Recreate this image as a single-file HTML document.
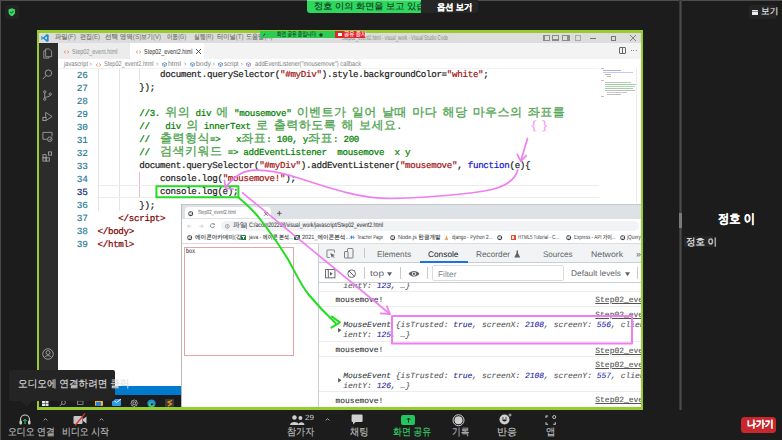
<!DOCTYPE html>
<html><head><meta charset="utf-8"><style>
*{margin:0;padding:0;box-sizing:border-box}
html,body{width:782px;height:440px;overflow:hidden;background:#1c1c1c}
body{position:relative;font-family:"Liberation Sans",sans-serif;text-rendering:geometricPrecision}
.a{position:absolute;white-space:pre}
.ui{font-family:"Liberation Sans",sans-serif}
.code{font-family:"Liberation Mono",monospace;font-size:9.2px;letter-spacing:-0.3px;line-height:13px;height:13px;color:#1f1f1f;-webkit-text-stroke:0.22px}
.ln{font-family:"Liberation Mono",monospace;font-size:9.4px;letter-spacing:-0.3px;line-height:13px;color:#237893;text-align:right;width:30px;-webkit-text-stroke:0.15px}
.cm{color:#008000}.st{color:#a31515}.kw{color:#1515d0}.tg{color:#800000}
.k{font-family:"Liberation Sans",sans-serif;font-size:12px;letter-spacing:0.49px;line-height:0;-webkit-text-stroke:0.3px}
.cm .k{color:#4ea34e}
.k2{-webkit-text-stroke:0.15px}
.con{font-family:"Liberation Mono",monospace;font-size:7.97px;line-height:10.2px;color:#303030;-webkit-text-stroke:0.1px}
.it{font-style:italic}
.num{color:#1a1aa6}
.lk{color:#555;text-decoration:underline}
svg{position:absolute;overflow:visible}
</style></head><body>
<div class="a" style="left:0px;top:0px;width:782px;height:1px;background:#4e4e4e;"></div>
<div class="a" style="left:0px;top:0px;width:1px;height:440px;background:#4a4a4a;"></div>
<div class="a" style="left:37px;top:30px;width:606px;height:379.5px;background:#97cc2e;"></div>
<div class="a" style="left:39px;top:33px;width:602px;height:374px;background:#fff;overflow:hidden">
<div class="a" style="left:-39px;top:-33px;width:782px;height:440px">
<div class="a" style="left:39px;top:33px;width:602px;height:10px;background:#dddddd;"></div>
<div class="a" style="left:39px;top:43px;width:19px;height:343px;background:#2c2c2c;"></div>
<div class="a" style="left:58px;top:43px;width:583px;height:15.6px;background:#f3f3f3;"></div>
<div class="a" style="left:58px;top:43px;width:72px;height:15.6px;background:#ececec;"></div>
<div class="a" style="left:130px;top:43px;width:74px;height:15.6px;background:#ffffff;"></div>
<div class="a" style="left:39px;top:385.8px;width:602px;height:9.6px;background:#007acc;"></div>
<div class="a" style="left:39px;top:395.4px;width:602px;height:12px;background:#1c1c1e;"></div>
<svg style="left:41px;top:34px;" width="8" height="8" viewBox="0 0 100 100"><path d="M96 10 L74 0 L30 42 L10 27 L2 31 L2 69 L10 73 L30 58 L74 100 L96 90 Z M74 28 L74 72 L44 50 Z M10 38 L22 50 L10 62 Z" fill="#1f8ad2" fill-rule="evenodd"></path></svg>
<div class="a ui" style="left: 55.3px; top: 34px; font-size: 7px; line-height: 8px; color: rgb(111, 111, 111); display: inline-block; transform: scaleX(0.91); transform-origin: 0px 0px;"><span class="k2">파일</span>(F)</div>
<div class="a ui" style="left: 80px; top: 34px; font-size: 7px; line-height: 8px; color: rgb(111, 111, 111); display: inline-block; transform: scaleX(0.857); transform-origin: 0px 0px;"><span class="k2">편집</span>(E)</div>
<div class="a ui" style="left: 104.6px; top: 34px; font-size: 7px; line-height: 8px; color: rgb(111, 111, 111); display: inline-block; transform: scaleX(0.929); transform-origin: 0px 0px;"><span class="k2">선택 영역</span>(S)</div>
<div class="a ui" style="left: 141px; top: 34px; font-size: 7px; line-height: 8px; color: rgb(111, 111, 111); display: inline-block; transform: scaleX(0.857); transform-origin: 0px 0px;"><span class="k2">보기</span>(V)</div>
<div class="a ui" style="left: 167px; top: 34px; font-size: 7px; line-height: 8px; color: rgb(111, 111, 111); display: inline-block; transform: scaleX(0.801); transform-origin: 0px 0px;"><span class="k2">이동</span>(G)</div>
<div class="a ui" style="left: 194px; top: 34px; font-size: 7px; line-height: 8px; color: rgb(111, 111, 111); display: inline-block; transform: scaleX(0.816); transform-origin: 0px 0px;"><span class="k2">실행</span>(R)</div>
<div class="a ui" style="left: 217px; top: 34px; font-size: 7px; line-height: 8px; color: rgb(111, 111, 111); display: inline-block; transform: scaleX(0.891); transform-origin: 0px 0px;"><span class="k2">터미널</span>(T)</div>
<div class="a ui" style="left: 246px; top: 34px; font-size: 7px; line-height: 8px; color: rgb(111, 111, 111); display: inline-block; transform: scaleX(0.864); transform-origin: 0px 0px;"><span class="k2">도움말</span>(H)</div>
<div class="a ui" style="left: 342px; top: 34.6px; font-size: 7px; line-height: 8px; color: rgb(138, 138, 138); display: inline-block; transform: scaleX(0.621); transform-origin: 0px 0px;">Step02_event2.html - visual_work - Visual Studio Code</div>
<div class="a" style="left:542.5px;top:35px;width:7px;height:6px;background:transparent;border:1px solid #8a8a8a"></div>
<div class="a" style="left:552px;top:35px;width:7px;height:6px;background:transparent;border:1px solid #8a8a8a"></div>
<div class="a" style="left:561.5px;top:35px;width:7px;height:6px;background:transparent;border:1px solid #8a8a8a"></div>
<div class="a" style="left:542.5px;top:35px;width:2.5px;height:6px;background:#8a8a8a;"></div>
<div class="a" style="left:552px;top:38.5px;width:7px;height:2.5px;background:#8a8a8a;"></div>
<div class="a" style="left:567px;top:35px;width:2.5px;height:6px;background:#8a8a8a;"></div>
<div class="a" style="left:575px;top:35px;width:6px;height:6px;background:transparent;border:1px solid #aaa"></div>
<div class="a" style="left:590px;top:38px;width:6px;height:0.9px;background:#777;"></div>
<div class="a" style="left:610.5px;top:35.5px;width:5px;height:5px;background:transparent;border:0.9px solid #777"></div>
<svg style="left:630px;top:35px;" width="6" height="6" viewBox="0 0 6 6"><path d="M0 0L6 6M6 0L0 6" stroke="#666" stroke-width="0.8"></path></svg>
<svg style="left:64px;top:49.8px;" width="5" height="4" viewBox="0 0 10 8"><path d="M3 1 L0.8 4 L3 7 M7 1 L9.2 4 L7 7" stroke="#e37933" stroke-width="1.6" fill="none"></path></svg>
<div class="a ui" style="left: 71.9px; top: 47px; font-size: 7.3px; line-height: 9px; color: rgb(140, 140, 140); display: inline-block; transform: scaleX(0.748); transform-origin: 0px 0px;">Step02_event.html</div>
<svg style="left:136px;top:49.8px;" width="5" height="4" viewBox="0 0 10 8"><path d="M3 1 L0.8 4 L3 7 M7 1 L9.2 4 L7 7" stroke="#e37933" stroke-width="1.6" fill="none"></path></svg>
<div class="a ui" style="left: 143.5px; top: 47px; font-size: 7.3px; line-height: 9px; color: rgb(51, 51, 51); display: inline-block; transform: scaleX(0.747); transform-origin: 0px 0px;">Step02_event2.html</div>
<svg style="left:195.5px;top:49px;" width="5" height="5" viewBox="0 0 6 6"><path d="M0 0L6 6M6 0L0 6" stroke="#444" stroke-width="1.1"></path></svg>
<div class="a" style="left:618.5px;top:47px;width:7px;height:7px;background:transparent;border:1px solid #666;border-radius:1px"></div>
<div class="a" style="left:621.5px;top:47px;width:1px;height:7px;background:#666;"></div>
<div class="a" style="left:631.0px;top:50.3px;width:1.2px;height:1.2px;background:#888;"></div>
<div class="a" style="left:633.3px;top:50.3px;width:1.2px;height:1.2px;background:#888;"></div>
<div class="a" style="left:635.6px;top:50.3px;width:1.2px;height:1.2px;background:#888;"></div>
<div class="a ui" style="left: 64px; top: 60.5px; font-size: 6.9px; line-height: 8px; color: rgb(122, 122, 122); display: inline-block; transform: scaleX(0.824); transform-origin: 0px 0px;">javascript</div>
<div class="a ui" style="left:89.5px;top:60.5px;font-size:7px;line-height:8px;color:#999;">›</div>
<svg style="left:96px;top:62.6px;" width="5" height="4" viewBox="0 0 10 8"><path d="M3 1 L0.8 4 L3 7 M7 1 L9.2 4 L7 7" stroke="#e37933" stroke-width="1.6" fill="none"></path></svg>
<div class="a ui" style="left: 103.5px; top: 60.5px; font-size: 6.9px; line-height: 8px; color: rgb(122, 122, 122); display: inline-block; transform: scaleX(0.808); transform-origin: 0px 0px;">Step02_event2.html</div>
<div class="a ui" style="left:156px;top:60.5px;font-size:7px;line-height:8px;color:#999;">›</div>
<svg style="left:161.5px;top:62px;" width="5" height="5" viewBox="0 0 10 10"><path d="M5 1 L9 3 L9 7 L5 9 L1 7 L1 3 Z M1 3 L5 5 L9 3 M5 5 V9" stroke="#3f77b5" stroke-width="1.2" fill="none"></path></svg>
<div class="a ui" style="left: 168px; top: 60.5px; font-size: 6.9px; line-height: 8px; color: rgb(122, 122, 122); display: inline-block; transform: scaleX(0.998); transform-origin: 0px 0px;">html</div>
<div class="a ui" style="left:184px;top:60.5px;font-size:7px;line-height:8px;color:#999;">›</div>
<svg style="left:189.5px;top:62px;" width="5" height="5" viewBox="0 0 10 10"><path d="M5 1 L9 3 L9 7 L5 9 L1 7 L1 3 Z M1 3 L5 5 L9 3 M5 5 V9" stroke="#3f77b5" stroke-width="1.2" fill="none"></path></svg>
<div class="a ui" style="left: 196px; top: 60.5px; font-size: 6.9px; line-height: 8px; color: rgb(122, 122, 122); display: inline-block; transform: scaleX(1.003); transform-origin: 0px 0px;">body</div>
<div class="a ui" style="left:212.5px;top:60.5px;font-size:7px;line-height:8px;color:#999;">›</div>
<svg style="left:217.5px;top:62px;" width="5" height="5" viewBox="0 0 10 10"><path d="M5 1 L9 3 L9 7 L5 9 L1 7 L1 3 Z M1 3 L5 5 L9 3 M5 5 V9" stroke="#3f77b5" stroke-width="1.2" fill="none"></path></svg>
<div class="a ui" style="left: 224px; top: 60.5px; font-size: 6.9px; line-height: 8px; color: rgb(122, 122, 122); display: inline-block; transform: scaleX(0.88); transform-origin: 0px 0px;">script</div>
<div class="a ui" style="left:240.5px;top:60.5px;font-size:7px;line-height:8px;color:#999;">›</div>
<svg style="left:245.5px;top:62px;" width="5" height="5" viewBox="0 0 10 10"><path d="M5 1 L9 3 L9 7 L5 9 L1 7 L1 3 Z M1 3 L5 5 L9 3 M5 5 V9" stroke="#8e5fb8" stroke-width="1.2" fill="none"></path></svg>
<div class="a ui" style="left: 255px; top: 60.5px; font-size: 6.9px; line-height: 8px; color: rgb(122, 122, 122); display: inline-block; transform: scaleX(0.832); transform-origin: 0px 0px;">addEventListener("mousemove") callback</div>
<svg style="left:42px;top:48px;" width="11" height="11" viewBox="0 0 24 24"><g fill="none" stroke="#a9a9a9" stroke-width="1.7"><path d="M8 6 H4 V22 H15 V19"></path><path d="M8 2 H16 L21 7 V19 H8 Z"></path></g></svg>
<svg style="left:42px;top:69px;" width="11" height="11" viewBox="0 0 24 24"><g fill="none" stroke="#a9a9a9" stroke-width="1.9"><circle cx="14" cy="9" r="7"></circle><path d="M9 14 L2 22"></path></g></svg>
<svg style="left:42px;top:90px;" width="11" height="11" viewBox="0 0 24 24"><g fill="none" stroke="#a9a9a9" stroke-width="1.8"><circle cx="6" cy="4" r="2.5"></circle><circle cx="6" cy="20" r="2.5"></circle><circle cx="18" cy="9" r="2.5"></circle><path d="M6 6.5 V17.5 M18 11.5 C18 16 6 14 6 17.5"></path></g></svg>
<svg style="left:42px;top:111px;" width="11" height="11" viewBox="0 0 24 24"><g fill="none" stroke="#a9a9a9" stroke-width="1.8"><path d="M8 13 V3 L22 12 L10 20"></path><rect x="2" y="14" width="7" height="7"></rect></g></svg>
<svg style="left:42px;top:131px;" width="11" height="11" viewBox="0 0 24 24"><g fill="none" stroke="#a9a9a9" stroke-width="1.8"><path d="M11 18 H2 V3 H22 V12"></path><circle cx="17" cy="18" r="5"></circle><path d="M15 18 L17 20 L20 16"></path></g></svg>
<svg style="left:42px;top:151px;" width="11" height="11" viewBox="0 0 24 24"><g fill="none" stroke="#a9a9a9" stroke-width="1.8"><rect x="2" y="8" width="7" height="7"></rect><rect x="2" y="15" width="7" height="7"></rect><rect x="9" y="15" width="7" height="7"></rect><rect x="14" y="2" width="7" height="7"></rect></g></svg>
<svg style="left:41.5px;top:348px;" width="12" height="12" viewBox="0 0 24 24"><g fill="none" stroke="#a9a9a9" stroke-width="1.7"><circle cx="12" cy="12" r="10.5"></circle><circle cx="12" cy="9" r="4"></circle><path d="M5 19 C7 14 17 14 19 19"></path></g></svg>
<div class="a" style="left:98.3px;top:67.7px;width:1px;height:143.22px;background:#e4e4e4;"></div>
<div class="a" style="left:118.5px;top:67.7px;width:1px;height:143.22px;background:#e4e4e4;"></div>
<div class="a" style="left:139.1px;top:67.7px;width:1px;height:13.02px;background:#e4e4e4;"></div>
<div class="a" style="left:139.1px;top:171.86px;width:1px;height:26.04px;background:#e9c0c0;"></div>
<div class="a" style="left:97px;top:185px;width:502px;height:1px;background:#ececec;"></div>
<div class="a" style="left:97px;top:197px;width:502px;height:1px;background:#ececec;"></div>
<div class="a" style="left:58px;top:67.5px;width:541px;height:1px;background:#f2f2f2;"></div>
<div class="a" style="left:601px;top:68px;width:36px;height:30px;opacity:0.55">
<div class="a" style="left:0px;top:0px;width:3px;height:1px;background:#d07070;"></div>
<div class="a" style="left:2px;top:2px;width:18px;height:1px;background:#6070c8;"></div>
<div class="a" style="left:2px;top:4px;width:30px;height:1px;background:#9aa0e0;"></div>
<div class="a" style="left:4px;top:6px;width:6px;height:1px;background:#50a050;"></div>
<div class="a" style="left:6px;top:8px;width:4px;height:1px;background:#e06060;"></div>
<div class="a" style="left:0px;top:12px;width:3px;height:1px;background:#d07070;"></div>
<div class="a" style="left:4px;top:14px;width:26px;height:1px;background:#70b070;"></div>
<div class="a" style="left:4px;top:16px;width:32px;height:1px;background:#60a060;"></div>
<div class="a" style="left:4px;top:18px;width:30px;height:1px;background:#70b070;"></div>
<div class="a" style="left:4px;top:20px;width:28px;height:1px;background:#60a060;"></div>
<div class="a" style="left:4px;top:22px;width:30px;height:1px;background:#888;"></div>
<div class="a" style="left:6px;top:24px;width:20px;height:1px;background:#999;"></div>
<div class="a" style="left:6px;top:26px;width:14px;height:1px;background:#888;"></div>
<div class="a" style="left:0px;top:28px;width:3px;height:1px;background:#d07070;"></div>
</div>
<div class="a" style="left:636px;top:68px;width:1px;height:135px;background:#ebebeb;"></div>
<div class="a ln" style="left:57.5px;top:68.9px">26</div>
<div class="a code" style="left:97.5px;top:68.3px">            document.querySelector(<span class="st">"#myDiv"</span>).style.backgroundColor=<span class="st">"white"</span>;</div>
<div class="a ln" style="left:57.5px;top:81.92px">27</div>
<div class="a code" style="left:97.5px;top:81.32px">        });</div>
<div class="a ln" style="left:57.5px;top:94.94px">28</div>
<div class="a code" style="left:97.5px;top:94.34px"></div>
<div class="a ln" style="left:57.5px;top:107.96px">29</div>
<div class="a code" style="left:97.5px;top:107.36px"><span class="cm">        //3. <span class="k">위의</span> div <span class="k">에</span> "mousemove" <span class="k">이벤트가</span> <span class="k">일어</span> <span class="k">날때</span> <span class="k">마다</span> <span class="k">해당</span> <span class="k">마우스의</span> <span class="k">좌표를</span></span></div>
<div class="a ln" style="left:57.5px;top:120.98px">30</div>
<div class="a code" style="left:97.5px;top:120.38px"><span class="cm">        //   div <span class="k">의</span> innerText <span class="k">로</span> <span class="k">출력하도록</span> <span class="k">해</span> <span class="k">보세요</span>.</span></div>
<div class="a ln" style="left:57.5px;top:134.0px">31</div>
<div class="a code" style="left:97.5px;top:133.4px"><span class="cm">        //  <span class="k">출력형식</span>=&gt;   x<span class="k">좌표</span>: 100, y<span class="k">좌표</span>: 200</span></div>
<div class="a ln" style="left:57.5px;top:147.02px">32</div>
<div class="a code" style="left:97.5px;top:146.42px"><span class="cm">        //  <span class="k">검색키워드</span> =&gt; addEventListener  mousemove  x y</span></div>
<div class="a ln" style="left:57.5px;top:160.04px">33</div>
<div class="a code" style="left:97.5px;top:159.44px">        document.querySelector(<span class="st">"#myDiv"</span>).addEventListener(<span class="st">"mousemove"</span>, <span class="kw">function</span>(e){</div>
<div class="a ln" style="left:57.5px;top:173.06px">34</div>
<div class="a code" style="left:97.5px;top:172.46px">            console.log(<span class="st">"mousemove!"</span>);</div>
<div class="a ln" style="left:57.5px;top:186.08px;color:#0b216f">35</div>
<div class="a code" style="left:97.5px;top:185.48px">            console.log(e);</div>
<div class="a ln" style="left:57.5px;top:199.1px">36</div>
<div class="a code" style="left:97.5px;top:198.5px">        });</div>
<div class="a ln" style="left:57.5px;top:212.12px">37</div>
<div class="a code" style="left:97.5px;top:211.52px">    <span class="tg">&lt;/script&gt;</span></div>
<div class="a ln" style="left:57.5px;top:225.14px">38</div>
<div class="a code" style="left:97.5px;top:224.54px"><span class="tg">&lt;/body&gt;</span></div>
<div class="a ln" style="left:57.5px;top:238.16px">39</div>
<div class="a code" style="left:97.5px;top:237.56px"><span class="tg">&lt;/html&gt;</span></div>
<svg style="left:42px;top:400.5px;" width="6.5" height="5" viewBox="0 0 13 10"><path d="M0 0H6V4.5H0ZM7 0H13V4.5H7ZM0 5.5H6V10H0ZM7 5.5H13V10H7Z" fill="#e8e8e8"></path></svg>
<svg style="left:59px;top:400px;" width="7" height="6" viewBox="0 0 14 12"><g fill="none" stroke="#ccc" stroke-width="1.2"><circle cx="9" cy="5" r="4"></circle><path d="M6 8 L1 12"></path></g></svg>
<svg style="left:77px;top:400px;" width="6.5" height="5.5" viewBox="0 0 13 11"><g fill="none" stroke="#bbb" stroke-width="1.2"><rect x="1" y="2" width="11" height="7"></rect><path d="M4 0 H12"></path></g></svg>
<div class="a" style="left:94.5px;top:399.5px;width:8px;height:6px;background:#f2b632;border-radius:1px"></div>
<div class="a" style="left:96px;top:402px;width:5px;height:3.5px;background:#2f7dd4;"></div>
<div class="a" style="left:111.5px;top:398.5px;width:9px;height:7.5px;background:#2f9be8;border-radius:1px"></div>
<svg style="left:111.5px;top:399px;" width="9" height="5" viewBox="0 0 9 5"><path d="M0 0 L4.5 3.5 L9 0" stroke="#e9f4fc" stroke-width="1" fill="none"></path></svg>
<svg style="left:129.5px;top:398.5px;" width="8.5" height="8.5" viewBox="0 0 24 24"><g fill="none" stroke="#cfcfcf" stroke-width="2.2"><circle cx="12" cy="12" r="4"></circle><path d="M12 2 L15 5 L19 5 L19 9 L22 12 L19 15 L19 19 L15 19 L12 22 L9 19 L5 19 L5 15 L2 12 L5 9 L5 5 L9 5 Z"></path></g></svg>
<svg style="left:147.2px;top:398.5px;" width="9" height="9" viewBox="0 0 24 24"><circle cx="12" cy="12" r="11" fill="#1b8fd8"></circle><path d="M4 14 C5 8 16 6 20 12 C19 9 12 9 12 14 C13 18 20 18 22 15 C20 22 8 24 4 14Z" fill="#3ccf6a"></path><circle cx="12.5" cy="14" r="3" fill="#1c1c1e"></circle></svg>
<div class="a" style="left:165px;top:398.5px;width:8.6px;height:8.5px;background:#3b3b3b;"></div>
<svg style="left:166.5px;top:399.5px;" width="6" height="6.5" viewBox="0 0 12 13"><path d="M10 1 L2 4 L9 8 L2 12" stroke="#ff9a1a" stroke-width="2.2" fill="none"></path></svg>
<div class="a" style="left:181px;top:203.5px;width:460px;height:204px;background:#ffffff;border-left:1px solid #b9b9b9;border-top:1px solid #c6c6c6"></div>
<div class="a" style="left:182px;top:204.5px;width:459px;height:14px;background:#dee1e6;"></div>
<div class="a" style="left:184.6px;top:206.9px;width:86px;height:11.6px;background:#ffffff;border-radius:4px 4px 0 0"></div>
<svg style="left:188.3px;top:210.8px;" width="5.4" height="5.4" viewBox="0 0 10 10"><circle cx="5" cy="5" r="4.6" fill="#3c4043"></circle><path d="M2 3 C4 4 5 2 7 2 C8 4 6 5 8 7 C6 8 5 6 3 8 C3 6 1 6 2 3Z" fill="#fff" opacity="0.85"></path></svg>
<div class="a ui" style="left: 197.6px; top: 210.2px; font-size: 6px; line-height: 7px; color: rgb(95, 99, 104); display: inline-block; transform: scaleX(0.712); transform-origin: 0px 0px;">Step02_event2.html</div>
<svg style="left:263.6px;top:211.6px;" width="3.8" height="3.8" viewBox="0 0 6 6"><path d="M0 0L6 6M6 0L0 6" stroke="#555" stroke-width="1.1"></path></svg>
<svg style="left:276.8px;top:211px;" width="4.6" height="4.6" viewBox="0 0 6 6"><path d="M3 0V6M0 3H6" stroke="#444" stroke-width="1.1"></path></svg>
<div class="a" style="left:182px;top:218.5px;width:459px;height:13px;background:#ffffff;"></div>
<svg style="left:187.3px;top:223.6px;" width="4.8" height="4.4" viewBox="0 0 10 9"><path d="M9 4.5H1.5 M5 1 L1.3 4.5 L5 8" stroke="#b8b8b8" stroke-width="1.3" fill="none"></path></svg>
<svg style="left:198.5px;top:223.6px;" width="4.8" height="4.4" viewBox="0 0 10 9"><path d="M1 4.5H8.5 M5 1 L8.7 4.5 L5 8" stroke="#b8b8b8" stroke-width="1.3" fill="none"></path></svg>
<svg style="left:210.2px;top:223.4px;" width="5" height="5" viewBox="0 0 10 10"><path d="M8.3 3.3 A4 4 0 1 0 8.8 6" stroke="#5f6368" stroke-width="1.4" fill="none"></path><path d="M6 1 L9.3 1 L9.3 4.3Z" fill="#5f6368"></path></svg>
<div class="a" style="left:221.4px;top:220.7px;width:418px;height:10px;background:#f1f3f4;border-radius:5px"></div>
<svg style="left:224.8px;top:223.5px;" width="4.6" height="4.6" viewBox="0 0 10 10"><circle cx="5" cy="5" r="4.2" stroke="#5f6368" stroke-width="1.1" fill="none"></circle><path d="M5 4V7.5" stroke="#5f6368" stroke-width="1.2"></path><circle cx="5" cy="2.6" r="0.7" fill="#5f6368"></circle></svg>
<div class="a ui" style="left: 232.6px; top: 222.1px; font-size: 6.5px; line-height: 7.5px; color: rgb(95, 99, 104); display: inline-block; transform: scaleX(1.026); transform-origin: 0px 0px;"><span class="k2">파일</span></div>
<div class="a" style="left:245.5px;top:222.5px;width:0.8px;height:6.5px;background:#9aa0a6;"></div>
<div class="a ui" style="left: 248.6px; top: 222.1px; font-size: 6.5px; line-height: 7.5px; color: rgb(32, 33, 36); display: inline-block; transform: scaleX(0.785); transform-origin: 0px 0px;">C:/acorn202208/visual_work/javascript/Step02_event2.html</div>
<svg style="left:187.1px;top:235.1px;" width="5.4" height="5.4" viewBox="0 0 10 10"><circle cx="5" cy="5" r="4.6" fill="#3c4043"></circle><path d="M2 3 C4 4 5 2 7 2 C8 4 6 5 8 7 C6 8 5 6 3 8 C3 6 1 6 2 3Z" fill="#fff" opacity="0.85"></path></svg>
<div class="a ui" style="left: 195px; top: 234.6px; font-size: 6px; line-height: 7px; color: rgb(60, 64, 67); display: inline-block; transform: scaleX(0.93); transform-origin: 0px 0px;"><span class="k2">에이콘아카데미</span>(<span class="k2">강</span>...</div>
<div class="a" style="left:240.6px;top:234.6px;width:5.5px;height:5.7px;background:#188038;border-radius:0.6px"></div>
<div class="a" style="left:241.8px;top:236px;width:3.1px;height:0.9px;background:#fff;"></div>
<div class="a" style="left:242.9px;top:236px;width:0.9px;height:3.2px;background:#fff;"></div>
<div class="a ui" style="left: 249px; top: 234.6px; font-size: 6px; line-height: 7px; color: rgb(60, 64, 67); display: inline-block; transform: scaleX(0.835); transform-origin: 0px 0px;">java - <span class="k2">에이콘 본석</span>...</div>
<div class="a" style="left:294.1px;top:234.6px;width:5.5px;height:5.7px;background:#188038;border-radius:0.6px"></div>
<div class="a" style="left:295.3px;top:236px;width:3.1px;height:0.9px;background:#fff;"></div>
<div class="a" style="left:296.4px;top:236px;width:0.9px;height:3.2px;background:#fff;"></div>
<div class="a ui" style="left: 302px; top: 234.6px; font-size: 6px; line-height: 7px; color: rgb(60, 64, 67); display: inline-block; transform: scaleX(0.928); transform-origin: 0px 0px;">2021_<span class="k2">에이콘본석</span>...</div>
<svg style="left:349.5px;top:235.3px;" width="5" height="4.5" viewBox="0 0 10 9"><path d="M3 0.5 L0.5 4.5 L3 8.5 L5.5 4.5Z" fill="#2f80ed"></path><path d="M7 0.5 L4.5 4.5 L7 8.5 L9.5 4.5Z" fill="#6fa8f5"></path></svg>
<div class="a ui" style="left: 357px; top: 234.6px; font-size: 6px; line-height: 7px; color: rgb(60, 64, 67); display: inline-block; transform: scaleX(0.702); transform-origin: 0px 0px;">Teacher Page</div>
<svg style="left:390.1px;top:235.1px;" width="5.4" height="5.4" viewBox="0 0 10 10"><circle cx="5" cy="5" r="4.6" fill="#3c4043"></circle><path d="M2 3 C4 4 5 2 7 2 C8 4 6 5 8 7 C6 8 5 6 3 8 C3 6 1 6 2 3Z" fill="#fff" opacity="0.85"></path></svg>
<div class="a ui" style="left: 398px; top: 234.6px; font-size: 6px; line-height: 7px; color: rgb(60, 64, 67); display: inline-block; transform: scaleX(0.925); transform-origin: 0px 0px;">Node.js <span class="k2">한글개발</span></div>
<svg style="left:443.5px;top:235px;" width="4.5" height="5.2" viewBox="0 0 9 10"><path d="M2 9 L5 1 L8 9Z" fill="#f29d38"></path><path d="M1 9 H8" stroke="#c77" stroke-width="1"></path></svg>
<div class="a ui" style="left: 451.5px; top: 234.6px; font-size: 6px; line-height: 7px; color: rgb(60, 64, 67); display: inline-block; transform: scaleX(0.778); transform-origin: 0px 0px;">django - Python 2...</div>
<svg style="left:497.40000000000003px;top:235.1px;" width="5.4" height="5.4" viewBox="0 0 10 10"><circle cx="5" cy="5" r="4.6" fill="#3c4043"></circle><path d="M2 3 C4 4 5 2 7 2 C8 4 6 5 8 7 C6 8 5 6 3 8 C3 6 1 6 2 3Z" fill="#fff" opacity="0.85"></path></svg>
<div class="a" style="left:510.5px;top:234.6px;width:5.2px;height:5.6px;background:#e44d26;border-radius:0.5px"></div>
<div class="a" style="left:511.8px;top:235.8px;width:2.6px;height:3.2px;background:#fff;opacity:0.85"></div>
<div class="a ui" style="left: 518px; top: 234.6px; font-size: 6px; line-height: 7px; color: rgb(60, 64, 67); display: inline-block; transform: scaleX(0.736); transform-origin: 0px 0px;">HTML5 Tutorial - C...</div>
<svg style="left:565.6px;top:235.1px;" width="5.4" height="5.4" viewBox="0 0 10 10"><circle cx="5" cy="5" r="4.6" fill="#3c4043"></circle><path d="M2 3 C4 4 5 2 7 2 C8 4 6 5 8 7 C6 8 5 6 3 8 C3 6 1 6 2 3Z" fill="#fff" opacity="0.85"></path></svg>
<div class="a ui" style="left: 573.7px; top: 234.6px; font-size: 6px; line-height: 7px; color: rgb(60, 64, 67); display: inline-block; transform: scaleX(0.755); transform-origin: 0px 0px;">Express - API <span class="k2">가이</span>...</div>
<svg style="left:619.6px;top:235.1px;" width="5.4" height="5.4" viewBox="0 0 10 10"><circle cx="5" cy="5" r="4.6" fill="#3c4043"></circle><path d="M2 3 C4 4 5 2 7 2 C8 4 6 5 8 7 C6 8 5 6 3 8 C3 6 1 6 2 3Z" fill="#fff" opacity="0.85"></path></svg>
<div class="a ui" style="left: 627px; top: 234.6px; font-size: 6px; line-height: 7px; color: rgb(60, 64, 67); display: inline-block; transform: scaleX(0.792); transform-origin: 0px 0px;">jQuery</div>
<div class="a" style="left:182px;top:243.2px;width:459px;height:0.8px;background:#dadce0;"></div>
<div class="a" style="left:184.3px;top:247.4px;width:109.3px;height:108.8px;background:transparent;border:1px solid #e3a5a5"></div>
<div class="a ui" style="left: 185.6px; top: 248.3px; font-size: 6.6px; line-height: 7.5px; color: rgb(34, 34, 34); display: inline-block; transform: scaleX(0.846); transform-origin: 0px 0px;">box</div>
<div class="a" style="left:318px;top:243.5px;width:323px;height:164px;background:#ffffff;border-left:1px solid #cacdd1"></div>
<div class="a" style="left:319px;top:243.5px;width:322px;height:19px;background:#f1f3f4;"></div>
<div class="a" style="left:319px;top:262.3px;width:322px;height:0.9px;background:#cacdd1;"></div>
<svg style="left:325.8px;top:248.8px;" width="9.4" height="9.4" viewBox="0 0 20 20"><path d="M8 18 H3 A1 1 0 0 1 2 17 V3 A1 1 0 0 1 3 2 H17 A1 1 0 0 1 18 3 V8" stroke="#5f6368" stroke-width="1.6" fill="none"></path><path d="M9 9 L19 13 L15 14.5 L18.5 18 L17.5 19 L14 15.5 L12.5 19Z" fill="#5f6368"></path></svg>
<svg style="left:344.3px;top:248.3px;" width="10" height="10.5" viewBox="0 0 20 21"><rect x="7" y="1" width="11" height="19" rx="1.5" stroke="#5f6368" stroke-width="1.6" fill="none"></rect><rect x="1" y="7" width="7" height="13" rx="1" stroke="#5f6368" stroke-width="1.6" fill="#f1f3f4"></rect></svg>
<div class="a" style="left:363.7px;top:248px;width:0.9px;height:10px;background:#c9c9c9;"></div>
<div class="a ui" style="left: 377px; top: 249.8px; font-size: 8.2px; line-height: 10px; color: rgb(95, 99, 104); display: inline-block; transform: scaleX(0.996); transform-origin: 0px 0px;">Elements</div>
<div class="a ui" style="left: 428px; top: 249.8px; font-size: 8.2px; line-height: 10px; color: rgb(32, 33, 36); display: inline-block; transform: scaleX(1.015); transform-origin: 0px 0px;">Console</div>
<div class="a" style="left:420px;top:261px;width:47.5px;height:2px;background:#1a73e8;"></div>
<div class="a ui" style="left: 476px; top: 249.8px; font-size: 8.2px; line-height: 10px; color: rgb(95, 99, 104); display: inline-block; transform: scaleX(1.009); transform-origin: 0px 0px;">Recorder</div>
<svg style="left:514.2px;top:249.6px;" width="6.5" height="8" viewBox="0 0 13 16"><path d="M4 1 H9 M5 1 V6 L1 14 A1 1 0 0 0 2 15 H11 A1 1 0 0 0 12 14 L8 6 V1" fill="#5f6368"></path></svg>
<div class="a ui" style="left: 543.4px; top: 249.8px; font-size: 8.2px; line-height: 10px; color: rgb(95, 99, 104); display: inline-block; transform: scaleX(0.982); transform-origin: 0px 0px;">Sources</div>
<div class="a ui" style="left: 590.8px; top: 249.8px; font-size: 8.2px; line-height: 10px; color: rgb(95, 99, 104); display: inline-block; transform: scaleX(1.066); transform-origin: 0px 0px;">Network</div>
<div class="a ui" style="left:636px;top:249px;font-size:9px;line-height:10px;color:#5f6368;">»</div>
<div class="a" style="left:319px;top:281.6px;width:322px;height:0.9px;background:#cacdd1;"></div>
<svg style="left:324.5px;top:268.6px;" width="10.5" height="9.4" viewBox="0 0 19 17"><rect x="1" y="1" width="17" height="15" stroke="#5f6368" stroke-width="1.7" fill="none"></rect><path d="M6 1 V16" stroke="#5f6368" stroke-width="1.7"></path><path d="M9 5 L14 8.5 L9 12Z" fill="#5f6368"></path></svg>
<svg style="left:346.6px;top:268.6px;" width="9.3" height="9.3" viewBox="0 0 17 17"><circle cx="8.5" cy="8.5" r="7" stroke="#5f6368" stroke-width="1.8" fill="none"></circle><path d="M3.5 3.5 L13.5 13.5" stroke="#5f6368" stroke-width="1.8"></path></svg>
<div class="a" style="left:363.6px;top:266.5px;width:0.9px;height:12px;background:#c9c9c9;"></div>
<div class="a ui" style="left: 370px; top: 268.6px; font-size: 8.2px; line-height: 10px; color: rgb(95, 99, 104); display: inline-block; transform: scaleX(1.229); transform-origin: 0px 0px;">top</div>
<svg style="left:387px;top:271.5px;" width="5" height="4.3" viewBox="0 0 10 8"><path d="M0 0 H10 L5 8Z" fill="#5f6368"></path></svg>
<div class="a" style="left:399.6px;top:266.5px;width:0.9px;height:12px;background:#c9c9c9;"></div>
<svg style="left:407.5px;top:269.7px;" width="12" height="7.5" viewBox="0 0 22 14"><path d="M1 7 C5 0 17 0 21 7 C17 14 5 14 1 7Z" fill="#5f6368"></path><circle cx="11" cy="7" r="3.8" fill="#fff"></circle><circle cx="11" cy="7" r="2.2" fill="#5f6368"></circle></svg>
<div class="a" style="left:426.6px;top:266.5px;width:0.9px;height:12px;background:#c9c9c9;"></div>
<div class="a" style="left:431.5px;top:265.3px;width:132.5px;height:15.3px;background:#ffffff;border:1px solid #dadce0;border-radius:2px"></div>
<div class="a ui" style="left: 437.5px; top: 269.5px; font-size: 8.2px; line-height: 10px; color: rgb(128, 134, 139); display: inline-block; transform: scaleX(1.016); transform-origin: 0px 0px;">Filter</div>
<div class="a ui" style="left: 570.6px; top: 269.2px; font-size: 8.2px; line-height: 10px; color: rgb(95, 99, 104); display: inline-block; transform: scaleX(1.017); transform-origin: 0px 0px;">Default levels</div>
<svg style="left:624.5px;top:271.5px;" width="5" height="4.3" viewBox="0 0 10 8"><path d="M0 0 H10 L5 8Z" fill="#5f6368"></path></svg>
<div class="a" style="left:637.3px;top:266.5px;width:0.9px;height:12px;background:#c9c9c9;"></div>
<div class="a" style="left:319px;top:282.5px;width:322px;height:125px;overflow:hidden">
<div class="a" style="left:-319px;top:-282.5px;width:782px;height:440px">
<div class="a con" style="left:343.2px;top:281.9px"><span class="it" style="color:#555">ientY: </span><span class="it num" style="color:#2424a8">123</span><span class="it" style="color:#555">, …}</span></div>
<div class="a" style="left:319px;top:290.8px;width:322px;height:0.9px;background:#ececec;"></div>
<div class="a con" style="left:335.5px;top:296.3px">mousemove!</div>
<div class="a con" style="left:595.3px;top:296.1px"><span class="lk">Step02_event2.html:35</span></div>
<div class="a" style="left:319px;top:305.9px;width:322px;height:0.9px;background:#ececec;"></div>
<div class="a con" style="left:595.3px;top:310.5px"><span class="lk">Step02_event2.html:35</span></div>
<div class="a con" style="left:343.2px;top:320.9px"><span class="it" style="color:#303942">MouseEvent</span> <span class="it" style="color:#555">{isTrusted: </span><span class="it num" style="color:#1f1f8f">true</span><span class="it" style="color:#555">, screenX: </span><span class="it num" style="color:#2424a8">2108</span><span class="it" style="color:#555">, screenY: </span><span class="it num" style="color:#2424a8">556</span><span class="it" style="color:#555">, clien</span></div>
<div class="a con" style="left:343.2px;top:331.1px"><span class="it" style="color:#555">ientY: </span><span class="it num" style="color:#2424a8">125</span><span class="it" style="color:#555">, …}</span></div>
<svg style="left:337.8px;top:327.6px;" width="3.6" height="4.4" viewBox="0 0 6 8"><path d="M0 0 L6 4 L0 8Z" fill="#555"></path></svg>
<div class="a" style="left:319px;top:340.9px;width:322px;height:0.9px;background:#ececec;"></div>
<div class="a con" style="left:335.5px;top:346.3px">mousemove!</div>
<div class="a con" style="left:595.3px;top:346.6px"><span class="lk">Step02_event2.html:35</span></div>
<div class="a" style="left:319px;top:355.7px;width:322px;height:0.9px;background:#ececec;"></div>
<div class="a con" style="left:595.3px;top:360.9px"><span class="lk">Step02_event2.html:35</span></div>
<div class="a con" style="left:343.2px;top:371.7px"><span class="it" style="color:#303942">MouseEvent</span> <span class="it" style="color:#555">{isTrusted: </span><span class="it num" style="color:#1f1f8f">true</span><span class="it" style="color:#555">, screenX: </span><span class="it num" style="color:#2424a8">2108</span><span class="it" style="color:#555">, screenY: </span><span class="it num" style="color:#2424a8">557</span><span class="it" style="color:#555">, clien</span></div>
<div class="a con" style="left:343.2px;top:381.5px"><span class="it" style="color:#555">ientY: </span><span class="it num" style="color:#2424a8">126</span><span class="it" style="color:#555">, …}</span></div>
<svg style="left:337.8px;top:378.40000000000003px;" width="3.6" height="4.4" viewBox="0 0 6 8"><path d="M0 0 L6 4 L0 8Z" fill="#555"></path></svg>
<div class="a" style="left:319px;top:390.8px;width:322px;height:0.9px;background:#ececec;"></div>
<div class="a con" style="left:335.5px;top:396.6px">mousemove!</div>
<div class="a con" style="left:595.3px;top:396.3px"><span class="lk">Step02_event2.html:35</span></div>
</div></div>
<svg style="left:0;top:0" width="782" height="440" viewBox="0 0 782 440">
<g fill="none" stroke-linecap="round" stroke-linejoin="round">
<rect x="156.4" y="186.2" width="82" height="11" stroke="#22dd22" stroke-width="2"></rect>
<path d="M238.5 197.6 C246 204 254 211 260 219 C270 232 280 246 289 261 C296 274 302 287 309 295 C319 307 327 315 335.5 323" stroke="#22dd22" stroke-width="2"></path>
<path d="M331.9 316.6 L339.9 322.4 L331.4 327.6" stroke="#22dd22" stroke-width="2"></path>
<path d="M517.8 170 C515 180 506 186 492 189.5 C462 195.5 425 197.5 391 198.5 C362 198.8 332 189 300 178.5 C276 170.5 252 167 241 173.5 C234 177.5 228.5 183 225.6 188.3" stroke="#ef7ff0" stroke-width="1.7"></path>
<path d="M224.4 180.3 L225.6 188.5 L233.4 189" stroke="#ef7ff0" stroke-width="1.7"></path>
<path d="M242.5 192.8 L390 314" stroke="#ef7ff0" stroke-width="1.7"></path>
<path d="M380.6 313.3 L390 314.2 L386.9 306.2" stroke="#ef7ff0" stroke-width="1.7"></path>
<rect x="392" y="316" width="240" height="27.5" stroke="#ef7ff0" stroke-width="2"></rect>
<path d="M527.5 138.4 L520.8 161" stroke="#ef7ff0" stroke-width="1.7"></path>
<path d="M517.3 154.3 L520.8 161.2 L526.4 155.5" stroke="#ef7ff0" stroke-width="1.7"></path>
</g></svg>
<div class="a ui" style="left: 530.5px; top: 118px; font-size: 12px; line-height: 14px; color: rgb(243, 166, 243); display: inline-block; transform: scaleX(1.453); transform-origin: 0px 0px;">{ }</div>
</div></div>
<div class="a" style="left:259.5px;top:30.8px;width:75.6px;height:7.6px;background:#2ecb55;"></div>
<div class="a" style="left:335.1px;top:30.8px;width:29.6px;height:7.6px;background:#e3262b;"></div>
<svg style="left:262px;top:32.5px;" width="4" height="4" viewBox="0 0 8 8"><path d="M1 7 L6 1 L7 2 L2 7Z" fill="#123"></path></svg>
<div class="a ui" style="left: 277px; top: 31.2px; font-size: 6.5px; line-height: 7px; color: rgb(26, 74, 38); display: inline-block; transform: scaleX(0.704); transform-origin: 0px 0px;"><span class="k2">화면 공유 중입니다</span></div>
<svg style="left:318.5px;top:32.5px;" width="4" height="4" viewBox="0 0 8 8"><circle cx="4" cy="4" r="3.5" fill="#1d3d25"></circle></svg>
<div class="a" style="left:338px;top:32.6px;width:3.6px;height:3.6px;background:#fff;"></div>
<div class="a ui" style="left: 343.5px; top: 31.2px; font-size: 6.5px; line-height: 7px; color: rgb(255, 232, 232); display: inline-block; transform: scaleX(0.798); transform-origin: 0px 0px;"><span class="k2">공유 중지</span></div>
<div class="a" style="left:5px;top:5px;width:13.5px;height:13.5px;background:#232323;border-radius:3px"></div>
<svg style="left:7.9px;top:7.6px;" width="7.6" height="8.4" viewBox="0 0 16 18"><path d="M8 0.5 L15 3 V8.5 C15 13 12 16 8 17.5 C4 16 1 13 1 8.5 V3 Z" fill="#3ad865"></path><path d="M4.6 8.8 L7 11 L11.4 6.4" stroke="#0f2a17" stroke-width="1.8" fill="none"></path></svg>
<div class="a" style="left:307px;top:0px;width:114px;height:12.7px;background:#2ed85f;border-radius:0 0 0 3px"></div>
<div class="a" style="left:307px;top:0px;width:114px;height:1px;background:#75e596;"></div>
<div class="a ui" style="left: 314px; top: 1.2px; font-size: 9px; line-height: 10.5px; color: rgb(20, 58, 31); display: inline-block; transform: scaleX(1.023); transform-origin: 0px 0px;"><span class="k2">정호 이의 화면을 보고 있습니다</span></div>
<div class="a" style="left:421px;top:0px;width:57px;height:12.7px;background:#262626;border-radius:0 0 3px 0"></div>
<div class="a ui" style="left: 437px; top: 1.6px; font-size: 9px; line-height: 10.5px; color: rgb(255, 255, 255); font-weight: bold; display: inline-block; transform: scaleX(0.915); transform-origin: 0px 0px;"><span class="k2">옵션 보기</span></div>
<svg style="left:467.8px;top:5.2px;" width="4.4" height="2.8" viewBox="0 0 8 5"><path d="M1 1 L4 4 L7 1" stroke="#fff" stroke-width="1.5" fill="none"></path></svg>
<div class="a" style="left:749px;top:5.2px;width:28px;height:14.2px;background:#252525;border-radius:4px"></div>
<svg style="left:752px;top:8.5px;" width="6" height="6" viewBox="0 0 12 12"><rect x="0" y="2" width="12" height="10" rx="1" fill="#eee"></rect><path d="M0 5 H12 M3 0 V2 M6 0 V2 M9 0 V2" stroke="#252525" stroke-width="1"></path></svg>
<div class="a ui" style="left: 761px; top: 6.3px; font-size: 9px; line-height: 10.5px; color: rgb(238, 238, 238); display: inline-block; transform: scaleX(0.963); transform-origin: 0px 0px;"><span class="k2">보기</span></div>
<div class="a" style="left:679px;top:0px;width:3px;height:410px;background:#383838;"></div>
<div class="a" style="left:680px;top:0px;width:1px;height:410px;background:#4b4b4b;"></div>
<div class="a" style="left:679px;top:212.5px;width:3px;height:15px;background:#7a7a7a;"></div>
<div class="a ui" style="left: 717.5px; top: 211.8px; font-size: 12.8px; line-height: 14px; color: rgb(255, 255, 255); font-weight: bold; display: inline-block; transform: scaleX(0.881); transform-origin: 0px 0px;"><span class="k2">정호 이</span></div>
<div class="a" style="left:684px;top:236px;width:29px;height:11px;background:#262626;"></div>
<div class="a ui" style="left: 686px; top: 237px; font-size: 9.8px; line-height: 11px; color: rgb(238, 238, 238); display: inline-block; transform: scaleX(0.969); transform-origin: 0px 0px;"><span class="k2">정호 이</span></div>
<svg style="left:19px;top:413.6px;" width="12" height="11" viewBox="0 0 24 22"><path d="M3 15 V11 A9 9 0 0 1 21 11 V15" stroke="#cfcfcf" stroke-width="2.2" fill="none"></path><rect x="1" y="13" width="5" height="8" rx="2" fill="#cfcfcf"></rect><rect x="18" y="13" width="5" height="8" rx="2" fill="#cfcfcf"></rect><path d="M12 20 V11 M8.5 14 L12 10.5 L15.5 14" stroke="#2fd36a" stroke-width="2" fill="none"></path></svg>
<svg style="left:42.5px;top:418.2px;" width="5" height="3" viewBox="0 0 8 5"><path d="M1 4 L4 1 L7 4" stroke="#bbb" stroke-width="1.4" fill="none"></path></svg>
<div class="a ui" style="left: 8.3px; top: 427.2px; font-size: 10px; line-height: 11px; color: rgb(189, 189, 189); display: inline-block; transform: scaleX(0.886); transform-origin: 0px 0px;"><span class="k2">오디오 연결</span></div>
<svg style="left:73px;top:415.3px;" width="14" height="10" viewBox="0 0 28 20"><rect x="1" y="2" width="18" height="16" rx="2" fill="#c4c4c4"></rect><path d="M20 8 L27 3 V17 L20 12Z" fill="#c4c4c4"></path></svg>
<svg style="left:73px;top:413px;" width="14" height="13" viewBox="0 0 28 26"><path d="M4 25 L24 1" stroke="#d9302c" stroke-width="2.4"></path></svg>
<svg style="left:98.5px;top:418.2px;" width="5" height="3" viewBox="0 0 8 5"><path d="M1 4 L4 1 L7 4" stroke="#bbb" stroke-width="1.4" fill="none"></path></svg>
<div class="a ui" style="left: 61.5px; top: 427.2px; font-size: 10px; line-height: 11px; color: rgb(189, 189, 189); display: inline-block; transform: scaleX(0.889); transform-origin: 0px 0px;"><span class="k2">비디오 시작</span></div>
<svg style="left:289.6px;top:414.6px;" width="14.4" height="10.4" viewBox="0 0 29 21"><circle cx="9" cy="5" r="4.5" fill="#cfcfcf"></circle><path d="M0 20 C0 12 18 12 18 20Z" fill="#cfcfcf"></path><circle cx="21" cy="6" r="4" fill="#cfcfcf"></circle><path d="M17 20 C17 13 29 13 29 20Z" fill="#cfcfcf"></path></svg>
<div class="a ui" style="left: 305px; top: 413px; font-size: 7.5px; line-height: 9px; color: rgb(207, 207, 207); display: inline-block; transform: scaleX(1.079); transform-origin: 0px 0px;">29</div>
<svg style="left:325px;top:418.2px;" width="5" height="3" viewBox="0 0 8 5"><path d="M1 4 L4 1 L7 4" stroke="#bbb" stroke-width="1.4" fill="none"></path></svg>
<div class="a ui" style="left: 286.6px; top: 427.2px; font-size: 10px; line-height: 11px; color: rgb(189, 189, 189); display: inline-block; transform: scaleX(0.907); transform-origin: 0px 0px;"><span class="k2">참가자</span></div>
<svg style="left:350.8px;top:414px;" width="12.2" height="11" viewBox="0 0 24 22"><path d="M3 1 H21 A2 2 0 0 1 23 3 V14 A2 2 0 0 1 21 16 H9 L4 21 V16 H3 A2 2 0 0 1 1 14 V3 A2 2 0 0 1 3 1Z" fill="#cfcfcf"></path></svg>
<div class="a ui" style="left: 350px; top: 427.2px; font-size: 10px; line-height: 11px; color: rgb(189, 189, 189); display: inline-block; transform: scaleX(0.933); transform-origin: 0px 0px;"><span class="k2">채팅</span></div>
<div class="a" style="left:401px;top:414.8px;width:14px;height:9.8px;background:#22c55e;border-radius:2px"></div>
<svg style="left:405.5px;top:416.5px;" width="5" height="6" viewBox="0 0 10 12"><path d="M5 11 V2 M1.5 5.5 L5 2 L8.5 5.5" stroke="#0c2a14" stroke-width="2" fill="none"></path></svg>
<div class="a ui" style="left: 392.8px; top: 427.2px; font-size: 10px; line-height: 11px; color: rgb(54, 209, 107); display: inline-block; transform: scaleX(0.891); transform-origin: 0px 0px;"><span class="k2">화면 공유</span></div>
<svg style="left:452px;top:413.5px;" width="13" height="12.5" viewBox="0 0 26 25"><circle cx="13" cy="12.5" r="11" stroke="#cfcfcf" stroke-width="2" fill="none"></circle><circle cx="13" cy="12.5" r="8" fill="#cfcfcf"></circle></svg>
<div class="a ui" style="left: 452px; top: 427.2px; font-size: 10px; line-height: 11px; color: rgb(189, 189, 189); display: inline-block; transform: scaleX(0.867); transform-origin: 0px 0px;"><span class="k2">기록</span></div>
<svg style="left:499px;top:413px;" width="13" height="12" viewBox="0 0 26 24"><circle cx="11" cy="13" r="10" fill="#cfcfcf"></circle><path d="M6 13 C7 18 15 18 16 13Z" fill="#1c1c1c"></path><circle cx="8" cy="10" r="1.3" fill="#1c1c1c"></circle><circle cx="14" cy="10" r="1.3" fill="#1c1c1c"></circle><path d="M22 1 V7 M19 4 H25" stroke="#cfcfcf" stroke-width="1.8"></path></svg>
<div class="a ui" style="left: 497px; top: 427.2px; font-size: 10px; line-height: 11px; color: rgb(189, 189, 189); display: inline-block; transform: scaleX(1); transform-origin: 0px 0px;"><span class="k2">반응</span></div>
<svg style="left:544.5px;top:414.7px;" width="11.3" height="10.3" viewBox="0 0 22 20"><path d="M6 2 H2 V6 M2 14 V18 H6 M16 18 H20 V14" stroke="#cfcfcf" stroke-width="2" fill="none"></path><circle cx="18" cy="4" r="3" stroke="#cfcfcf" stroke-width="1.8" fill="none"></circle></svg>
<div class="a ui" style="left: 546px; top: 427.2px; font-size: 10px; line-height: 11px; color: rgb(189, 189, 189); display: inline-block; transform: scaleX(0.933); transform-origin: 0px 0px;"><span class="k2">앱</span></div>
<div class="a" style="left:741px;top:417px;width:34.5px;height:15.5px;background:#c8282d;border-radius:3.5px"></div>
<div class="a ui" style="left: 747px; top: 419.2px; font-size: 9.5px; line-height: 11px; color: rgb(255, 255, 255); font-weight: bold; display: inline-block; transform: scaleX(0.936); transform-origin: 0px 0px;"><span class="k2">나가기</span></div>
<div class="a" style="left:8.6px;top:370.3px;width:106px;height:30.4px;background:#242424;border-radius:2px"></div>
<svg style="left:20.5px;top:400.5px;" width="11" height="5.5" viewBox="0 0 22 11"><path d="M0 0 H22 L11 11Z" fill="#242424"></path></svg>
<div class="a ui" style="left: 18px; top: 378.8px; font-size: 10.3px; line-height: 11px; color: rgb(221, 221, 221); display: inline-block; transform: scaleX(0.937); transform-origin: 0px 0px;"><span class="k2">오디오에 연결하려면 클릭</span></div>
</body></html>
